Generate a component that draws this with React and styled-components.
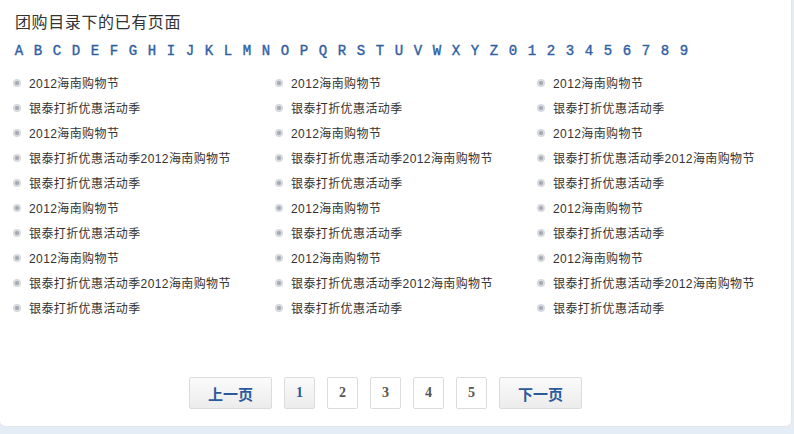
import styled, { createGlobalStyle } from "styled-components"

const GlobalStyle = createGlobalStyle`
	html, body {
		margin: 0;
		padding: 0;
		background: #e4ecf5;
		font-family: "Liberation Sans", "Noto Sans CJK SC", sans-serif;
	}
`
const Panel = styled.div`
	width: 792px;
	height: 427px;
	box-sizing: border-box;
	background: #fff;
	border-right: 1px solid #e2e6ec;
	border-bottom: 1px solid #e2e6ec;
	border-radius: 0 0 6px 6px;
	padding: 13px 0 0 12px;
	display: flex;
	flex-direction: column;
`
const Title = styled.h3`
	margin: 0 0 0 3px;
	font-size: 16px;
	letter-spacing: 0.6px;
	font-weight: normal;
	color: #333;
	line-height: 20px;
`
const Letters = styled.div`
	display: flex;
	margin: 10px 0 0 -2.5px;
	height: 16px;
`
const Letter = styled.a`
	width: 19px;
	flex: none;
	text-align: center;
	font-family: "Liberation Mono", "DejaVu Sans Mono", monospace;
	font-size: 14px;
	line-height: 16px;
	color: #2f5fa3;
	-webkit-text-stroke: 0.4px #2f5fa3;
	text-decoration: none;
	cursor: pointer;
`
const List = styled.ul`
	list-style: none;
	margin: 11px 0 0 0;
	padding: 0;
	display: grid;
	grid-template-columns: 262px 262px 262px;
	grid-auto-rows: 25px;
`
const Item = styled.li`
	display: flex;
	align-items: center;
	font-size: 12px;
	letter-spacing: 0.4px;
	color: #333;
	white-space: nowrap;
`
const Bullet = styled.span`
	width: 8px;
	height: 8px;
	box-sizing: border-box;
	border-radius: 50%;
	border: 2px solid #d6d9de;
	background: #a3a8b1;
	margin: 0 8px 0 1px;
	flex: none;
`
const Pager = styled.div`
	margin-top: auto;
	margin-bottom: 17px;
	margin-right: 32px;
	display: flex;
	justify-content: center;
	gap: 12px;
`
const PageButton = styled.button`
	height: 32px;
	width: ${p => p.$wide ? '83px' : '31px'};
	box-sizing: border-box;
	border: 1px solid #dcdcdc;
	border-radius: 2px;
	background: ${p => p.$wide || p.$active ? 'linear-gradient(#fbfbfb, #ececec)' : '#fff'};
	color: ${p => p.$wide || p.$active ? '#2a5a9b' : '#555'};
	font-family: "Liberation Serif", "Noto Sans CJK SC", serif;
	font-weight: bold;
	font-size: ${p => p.$wide ? '15px' : '14px'};
	padding: 0;
	cursor: pointer;
`

const letters = 'ABCDEFGHIJKLMNOPQRSTUVWXYZ0123456789'.split('')
const A = '2012海南购物节'
const B = '银泰打折优惠活动季'
const C = '银泰打折优惠活动季2012海南购物节'
const rows = [A, B, A, C, B, A, B, A, C, B]

function App () {
	return (
		<>
			<GlobalStyle />
			<Panel>
				<Title>团购目录下的已有页面</Title>
				<Letters>
					{letters.map(l => <Letter key={l}>{l}</Letter>)}
				</Letters>
				<List>
					{rows.map((text, i) => [0, 1, 2].map(col => (
						<Item key={`${i}-${col}`}>
							<Bullet />
							{text}
						</Item>
					)))}
				</List>
				<Pager>
					<PageButton $wide>上一页</PageButton>
					{[1, 2, 3, 4, 5].map(n => (
						<PageButton key={n} $active={n === 1}>{n}</PageButton>
					))}
					<PageButton $wide>下一页</PageButton>
				</Pager>
			</Panel>
		</>
	)
}
export default App;
